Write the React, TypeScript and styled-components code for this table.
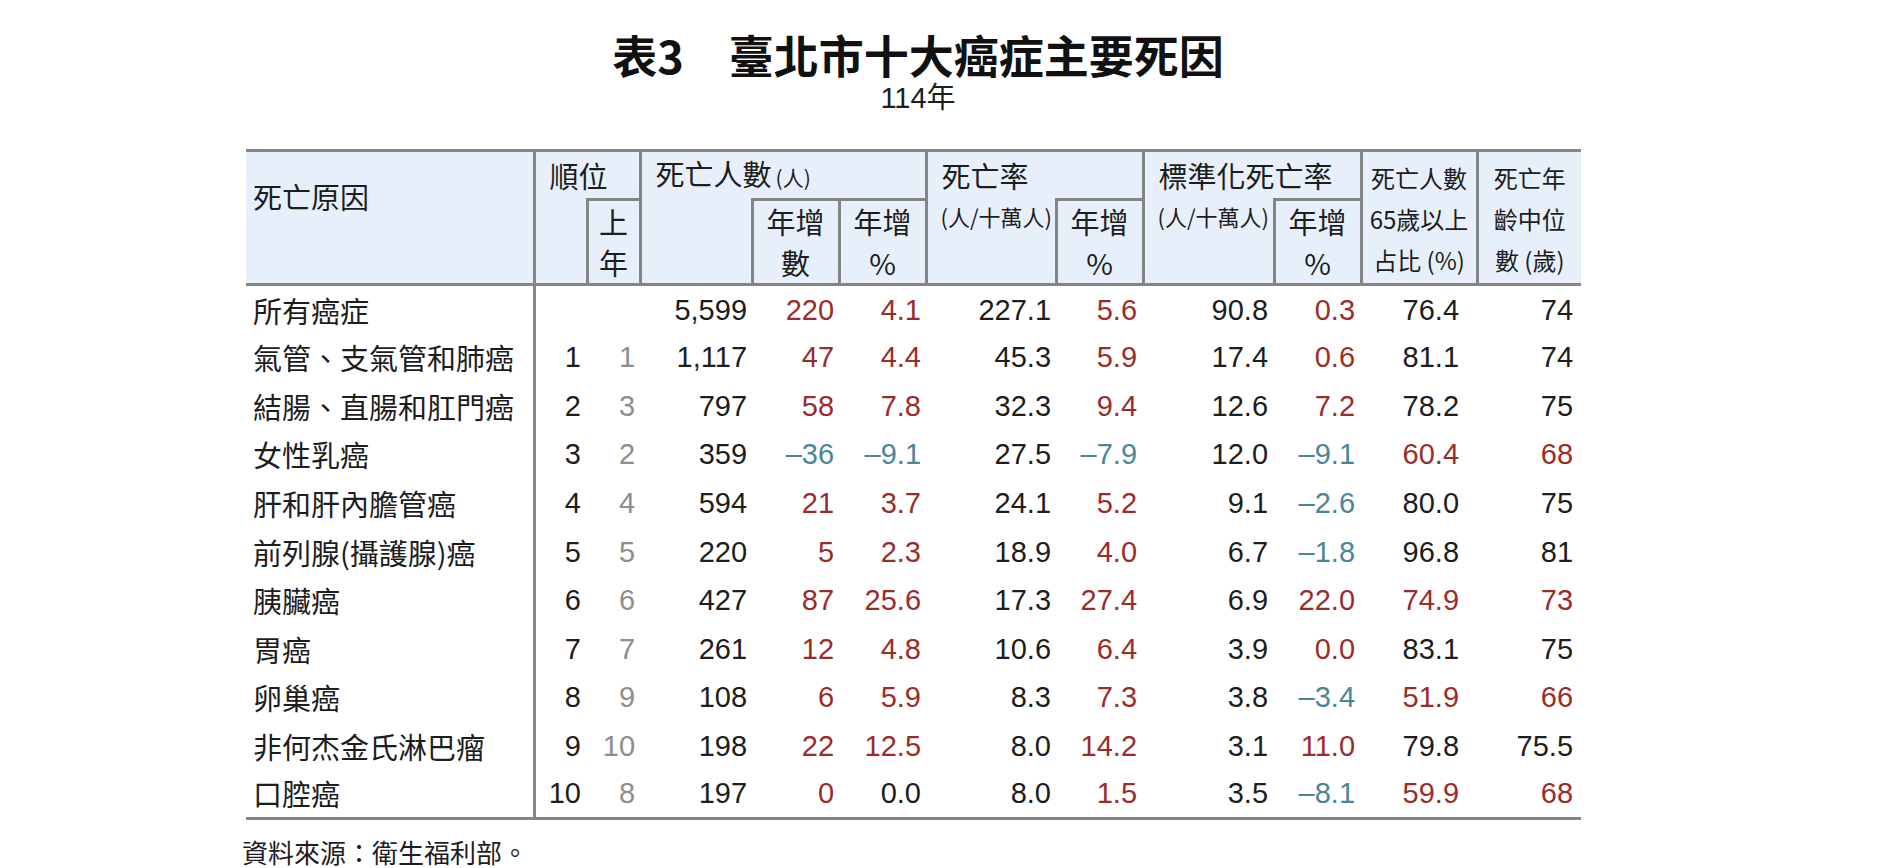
import React from 'react';
import styled, { createGlobalStyle, css } from 'styled-components';

const LINE = '#858585';
const HEAD_BG = '#e7f0fa';
const TONES: Record<string, string> = {
  k: '#1d1d1d',
  r: '#9b2c2c',
  b: '#4b8698',
  g: '#8e8e8e',
};

const CJK = '"Noto Sans CJK TC", sans-serif';
const NUM = '"Liberation Sans", "Noto Sans CJK TC", sans-serif';

const GlobalStyle = createGlobalStyle`
  html, body { margin: 0; padding: 0; background: #ffffff; }
  body { font-family: ${CJK}; color: #1d1d1d; }
`;

const Page = styled.main`
  width: 1335px;
  margin-left: 246px;
  padding-top: 30px;
`;

const Heading = styled.header`
  text-align: center;
  padding-left: 9px;
`;

const Title = styled.h1`
  margin: 0;
  font: 700 45px/50px ${CJK};
  color: #111111;
`;

const Subtitle = styled.div`
  margin-top: 1px;
  font: 400 29px/34px ${NUM};
  color: #1d1d1d;
`;

const Table = styled.table`
  margin-top: 34px;
  width: 1335px;
  table-layout: fixed;
  border-collapse: collapse;
  border-top: 3px solid ${LINE};
  border-bottom: 3px solid ${LINE};
`;

const Col = styled.col<{ $w: number }>`
  width: ${p => p.$w}px;
`;

const Thead = styled.thead`
  border-bottom: 3px solid ${LINE};
`;

const headBase = css`
  background: ${HEAD_BG};
  font-family: ${CJK};
  font-weight: 400;
  color: #1d1d1d;
  white-space: nowrap;
  padding: 0;
`;

const CauseHead = styled.th`
  ${headBase};
  font-size: 29px;
  line-height: 40px;
  text-align: left;
  vertical-align: top;
  padding: 24px 0 0 7px;
  border-right: 3px solid ${LINE};
`;

const GroupHead = styled.th`
  ${headBase};
  height: 46px;
  font-size: 29px;
  line-height: 40px;
  text-align: left;
  vertical-align: middle;
  padding-left: 14px;
  border-right: 3px solid ${LINE};
`;

const Unit = styled.span`
  font-size: 21px;
  margin-left: 4px;
`;

const StackHead = styled.th<{ $br?: boolean }>`
  ${headBase};
  font-size: 24px;
  line-height: 41px;
  text-align: center;
  vertical-align: middle;
  padding-top: 1px;
  ${p => p.$br && css`border-right: 3px solid ${LINE};`}
`;

const BlankHead = styled.td`
  ${headBase};
  height: 82px;
`;

const SubHead = styled.td<{ $last?: boolean }>`
  ${headBase};
  height: 82px;
  font-size: 29px;
  line-height: 41px;
  text-align: center;
  vertical-align: middle;
  border-top: 3px solid ${LINE};
  border-left: 3px solid ${LINE};
  ${p => p.$last && css`border-right: 3px solid ${LINE};`}
`;

const UnitHead = styled.td`
  ${headBase};
  font-size: 22px;
  line-height: 30px;
  text-align: left;
  vertical-align: top;
  padding: 1px 0 0 13px;
`;

const Row = styled.tr`
  height: 48.55px;
`;

const Cause = styled.td`
  font: 400 29px/40px ${CJK};
  color: #1d1d1d;
  padding: 0 0 0 7px;
  white-space: nowrap;
  vertical-align: middle;
  border-right: 3px solid ${LINE};
`;

const Num = styled.td<{ $tone: string; $pr: number }>`
  font: 400 29px/40px ${NUM};
  color: ${p => TONES[p.$tone]};
  text-align: right;
  vertical-align: middle;
  padding: 0 ${p => p.$pr}px 0 0;
  white-space: nowrap;
`;

const Footer = styled.p`
  margin: 17px 0 0 -4px;
  font: 400 26px/30px ${CJK};
  color: #1d1d1d;
`;

const WIDTHS = [288, 53, 53, 112, 87, 87, 130, 87, 131, 87, 116, 104];
const PADS = [6, 5, 5, 5, 5, 5, 6, 6, 6, 18, 8];

type RowData = { name: string; rank: string; prev: string; values: string[]; tones: string };

const ROWS: RowData[] = [
  { name: '所有癌症', rank: '', prev: '', values: ['5,599', '220', '4.1', '227.1', '5.6', '90.8', '0.3', '76.4', '74'], tones: 'krrkrkrkk' },
  { name: '氣管、支氣管和肺癌', rank: '1', prev: '1', values: ['1,117', '47', '4.4', '45.3', '5.9', '17.4', '0.6', '81.1', '74'], tones: 'krrkrkrkk' },
  { name: '結腸、直腸和肛門癌', rank: '2', prev: '3', values: ['797', '58', '7.8', '32.3', '9.4', '12.6', '7.2', '78.2', '75'], tones: 'krrkrkrkk' },
  { name: '女性乳癌', rank: '3', prev: '2', values: ['359', '–36', '–9.1', '27.5', '–7.9', '12.0', '–9.1', '60.4', '68'], tones: 'kbbkbkbrr' },
  { name: '肝和肝內膽管癌', rank: '4', prev: '4', values: ['594', '21', '3.7', '24.1', '5.2', '9.1', '–2.6', '80.0', '75'], tones: 'krrkrkbkk' },
  { name: '前列腺(攝護腺)癌', rank: '5', prev: '5', values: ['220', '5', '2.3', '18.9', '4.0', '6.7', '–1.8', '96.8', '81'], tones: 'krrkrkbkk' },
  { name: '胰臟癌', rank: '6', prev: '6', values: ['427', '87', '25.6', '17.3', '27.4', '6.9', '22.0', '74.9', '73'], tones: 'krrkrkrrr' },
  { name: '胃癌', rank: '7', prev: '7', values: ['261', '12', '4.8', '10.6', '6.4', '3.9', '0.0', '83.1', '75'], tones: 'krrkrkrkk' },
  { name: '卵巢癌', rank: '8', prev: '9', values: ['108', '6', '5.9', '8.3', '7.3', '3.8', '–3.4', '51.9', '66'], tones: 'krrkrkbrr' },
  { name: '非何杰金氏淋巴瘤', rank: '9', prev: '10', values: ['198', '22', '12.5', '8.0', '14.2', '3.1', '11.0', '79.8', '75.5'], tones: 'krrkrkrkk' },
  { name: '口腔癌', rank: '10', prev: '8', values: ['197', '0', '0.0', '8.0', '1.5', '3.5', '–8.1', '59.9', '68'], tones: 'krkkrkbrr' },
];

export default function App() {
  return (
    <>
      <GlobalStyle />
      <Page>
        <Heading>
          <Title>表3　臺北市十大癌症主要死因</Title>
          <Subtitle>114年</Subtitle>
        </Heading>
        <Table>
          <colgroup>
            {WIDTHS.map((w, i) => (
              <Col key={i} $w={w} />
            ))}
          </colgroup>
          <Thead>
            <tr>
              <CauseHead rowSpan={2}>死亡原因</CauseHead>
              <GroupHead colSpan={2}>順位</GroupHead>
              <GroupHead colSpan={3}>
                死亡人數<Unit>(人)</Unit>
              </GroupHead>
              <GroupHead colSpan={2}>死亡率</GroupHead>
              <GroupHead colSpan={2}>標準化死亡率</GroupHead>
              <StackHead rowSpan={2} $br>
                死亡人數
                <br />
                65歲以上
                <br />
                占比 (%)
              </StackHead>
              <StackHead rowSpan={2}>
                死亡年
                <br />
                齡中位
                <br />
                數 (歲)
              </StackHead>
            </tr>
            <tr>
              <BlankHead />
              <SubHead $last>
                上<br />年
              </SubHead>
              <BlankHead />
              <SubHead>
                年增<br />數
              </SubHead>
              <SubHead $last>
                年增<br />%
              </SubHead>
              <UnitHead>(人/十萬人)</UnitHead>
              <SubHead $last>
                年增<br />%
              </SubHead>
              <UnitHead>(人/十萬人)</UnitHead>
              <SubHead $last>
                年增<br />%
              </SubHead>
            </tr>
          </Thead>
          <tbody>
            {ROWS.map(r => (
              <Row key={r.name}>
                <Cause>{r.name}</Cause>
                <Num $tone="k" $pr={PADS[0]}>{r.rank}</Num>
                <Num $tone="g" $pr={PADS[1]}>{r.prev}</Num>
                {r.values.map((v, i) => (
                  <Num key={i} $tone={r.tones[i]} $pr={PADS[i + 2]}>
                    {v}
                  </Num>
                ))}
              </Row>
            ))}
          </tbody>
        </Table>
        <Footer>資料來源：衛生福利部。</Footer>
      </Page>
    </>
  );
}
